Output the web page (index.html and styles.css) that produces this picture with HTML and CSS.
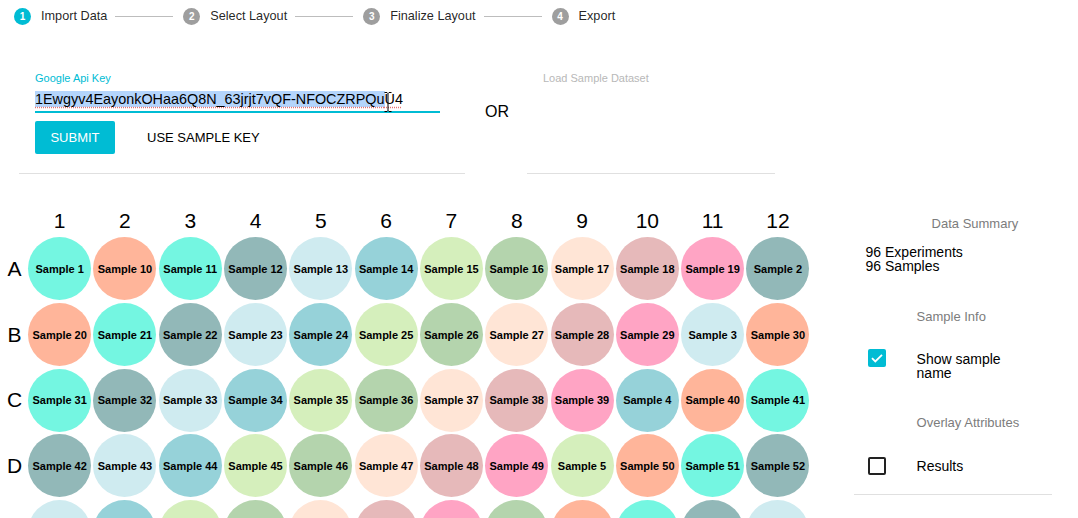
FILE: index.html
```html
<!DOCTYPE html>
<html>
<head>
<meta charset="utf-8">
<title>Plate Layout</title>
<link rel="stylesheet" href="styles.css">
</head>
<body>
<div class="stepper">
  <div class="step"><span class="step-icon active">1</span><span class="step-label">Import Data</span></div>
  <span class="step-line"></span>
  <div class="step"><span class="step-icon">2</span><span class="step-label">Select Layout</span></div>
  <span class="step-line"></span>
  <div class="step"><span class="step-icon">3</span><span class="step-label">Finalize Layout</span></div>
  <span class="step-line"></span>
  <div class="step"><span class="step-icon">4</span><span class="step-label">Export</span></div>
</div>

<div class="import">
  <div class="key-panel">
    <div class="field-label">Google Api Key</div>
    <div class="key-field">
      <span class="key-text"><span class="sel">1Ewgyv4EayonkOHaa6Q8N_63jrjt7vQF-NFOCZRPQu</span>U4</span>
      <svg class="ibeam" width="8" height="20" viewBox="0 0 8 20"><path d="M0.5 0.5h2.5l1 1l1-1h2.5M4 1.5v17M0.5 19.5h2.5l1-1l1 1h2.5" fill="none" stroke="#000" stroke-width="1"/></svg>
    </div>
    <div class="key-actions">
      <button class="btn-submit">SUBMIT</button>
      <button class="btn-flat">USE SAMPLE KEY</button>
    </div>
  </div>
  <div class="or">OR</div>
  <div class="dataset-panel">
    <div class="field-label disabled">Load Sample Dataset</div>
  </div>
</div>

<div class="main">
  <div class="plate">
    <div class="corner"></div>
    <div class="col-head">1</div><div class="col-head">2</div><div class="col-head">3</div><div class="col-head">4</div><div class="col-head">5</div><div class="col-head">6</div><div class="col-head">7</div><div class="col-head">8</div><div class="col-head">9</div><div class="col-head">10</div><div class="col-head">11</div><div class="col-head">12</div>

    <div class="row-head">A</div>
    <div class="well c1">Sample 1</div><div class="well c0">Sample 10</div><div class="well c1">Sample 11</div><div class="well c2">Sample 12</div><div class="well c3">Sample 13</div><div class="well c4">Sample 14</div><div class="well c5">Sample 15</div><div class="well c6">Sample 16</div><div class="well c7">Sample 17</div><div class="well c8">Sample 18</div><div class="well c9">Sample 19</div><div class="well c2">Sample 2</div>

    <div class="row-head">B</div>
    <div class="well c0">Sample 20</div><div class="well c1">Sample 21</div><div class="well c2">Sample 22</div><div class="well c3">Sample 23</div><div class="well c4">Sample 24</div><div class="well c5">Sample 25</div><div class="well c6">Sample 26</div><div class="well c7">Sample 27</div><div class="well c8">Sample 28</div><div class="well c9">Sample 29</div><div class="well c3">Sample 3</div><div class="well c0">Sample 30</div>

    <div class="row-head">C</div>
    <div class="well c1">Sample 31</div><div class="well c2">Sample 32</div><div class="well c3">Sample 33</div><div class="well c4">Sample 34</div><div class="well c5">Sample 35</div><div class="well c6">Sample 36</div><div class="well c7">Sample 37</div><div class="well c8">Sample 38</div><div class="well c9">Sample 39</div><div class="well c4">Sample 4</div><div class="well c0">Sample 40</div><div class="well c1">Sample 41</div>

    <div class="row-head">D</div>
    <div class="well c2">Sample 42</div><div class="well c3">Sample 43</div><div class="well c4">Sample 44</div><div class="well c5">Sample 45</div><div class="well c6">Sample 46</div><div class="well c7">Sample 47</div><div class="well c8">Sample 48</div><div class="well c9">Sample 49</div><div class="well c5">Sample 5</div><div class="well c0">Sample 50</div><div class="well c1">Sample 51</div><div class="well c2">Sample 52</div>

    <div class="row-head">E</div>
    <div class="well c3">Sample 53</div><div class="well c4">Sample 54</div><div class="well c5">Sample 55</div><div class="well c6">Sample 56</div><div class="well c7">Sample 57</div><div class="well c8">Sample 58</div><div class="well c9">Sample 59</div><div class="well c6">Sample 6</div><div class="well c0">Sample 60</div><div class="well c1">Sample 61</div><div class="well c2">Sample 62</div><div class="well c3">Sample 63</div>

    <div class="row-head">F</div>
    <div class="well c4">Sample 64</div><div class="well c5">Sample 65</div><div class="well c6">Sample 66</div><div class="well c7">Sample 67</div><div class="well c8">Sample 68</div><div class="well c9">Sample 69</div><div class="well c7">Sample 7</div><div class="well c0">Sample 70</div><div class="well c1">Sample 71</div><div class="well c2">Sample 72</div><div class="well c3">Sample 73</div><div class="well c4">Sample 74</div>

    <div class="row-head">G</div>
    <div class="well c5">Sample 75</div><div class="well c6">Sample 76</div><div class="well c7">Sample 77</div><div class="well c8">Sample 78</div><div class="well c9">Sample 79</div><div class="well c8">Sample 8</div><div class="well c0">Sample 80</div><div class="well c1">Sample 81</div><div class="well c2">Sample 82</div><div class="well c3">Sample 83</div><div class="well c4">Sample 84</div><div class="well c5">Sample 85</div>

    <div class="row-head">H</div>
    <div class="well c6">Sample 86</div><div class="well c7">Sample 87</div><div class="well c8">Sample 88</div><div class="well c9">Sample 89</div><div class="well c9">Sample 9</div><div class="well c0">Sample 90</div><div class="well c1">Sample 91</div><div class="well c2">Sample 92</div><div class="well c3">Sample 93</div><div class="well c4">Sample 94</div><div class="well c5">Sample 95</div><div class="well c6">Sample 96</div>
  </div>

  <div class="side">
    <div class="side-title t-summary">Data Summary</div>
    <div class="summary">96 Experiments<br>96 Samples</div>
    <div class="side-title t-info">Sample Info</div>
    <div class="check-row row-show">
      <span class="box checked"><svg width="18" height="18" viewBox="0 0 18 18"><path d="M4 9.2l3.3 3.3L14 5.8" fill="none" stroke="#fff" stroke-width="1.8"/></svg></span>
      <span class="check-label">Show sample name</span>
    </div>
    <div class="side-title t-overlay">Overlay Attributes</div>
    <div class="check-row row-results">
      <span class="box unchecked"></span>
      <span class="check-label single">Results</span>
    </div>
  </div>
</div>
</body>
</html>
```
FILE: styles.css
```css
* { box-sizing: border-box; }
html, body { overflow: hidden; }
body {
  margin: 0;
  font-family: "Liberation Sans", Arial, Helvetica, sans-serif;
  color: #000;
  background: #fff;
}

/* Stepper */
.stepper {
  display: flex;
  align-items: center;
  height: 32px;
  padding-left: 14px;
  font-size: 12.7px;
  color: rgba(0, 0, 0, 0.87);
}
.step { display: flex; align-items: center; }
.step-icon {
  width: 17px;
  height: 17px;
  border-radius: 50%;
  background: #9e9e9e;
  color: #fff;
  font-size: 10px;
  font-weight: bold;
  display: flex;
  align-items: center;
  justify-content: center;
  margin-right: 10px;
}
.step-icon.active { background: #00bcd4; }
.step-line {
  width: 58px;
  height: 1px;
  background: #bdbdbd;
  margin: 0 10px 0 8px;
}

/* Import section */
.import {
  display: flex;
  align-items: flex-start;
  padding-top: 40px;
}
.key-panel {
  margin-left: 19px;
  width: 446px;
  padding: 0 16px 19px;
  border-bottom: 1px solid #e0e0e0;
}
.field-label {
  font-size: 11px;
  line-height: 12px;
  height: 12px;
  color: #00bcd4;
}
.field-label.disabled { color: #b8b8b8; }
.key-field {
  position: relative;
  width: 405px;
  height: 29px;
  padding-top: 6px;
  border-bottom: 2px solid #00bcd4;
  font-size: 14.4px;
  line-height: 18px;
  white-space: nowrap;
}
.key-text {
  text-decoration: underline dotted #e57373;
  text-underline-offset: 3px;
}
.sel { background: #b4d5fc; }
.ibeam { position: absolute; left: 349px; top: 8px; }
.key-actions {
  display: flex;
  align-items: center;
  margin-top: 8px;
}
.btn-submit {
  width: 80px;
  height: 33px;
  border: none;
  border-radius: 2px;
  background: #00bcd4;
  color: #fff;
  font-family: inherit;
  font-size: 13px;
  padding: 0;
}
.btn-flat {
  margin-left: 16px;
  height: 33px;
  padding: 0 16px;
  border: none;
  background: transparent;
  color: #000;
  font-family: inherit;
  font-size: 13px;
}
.or {
  width: 62px;
  padding-left: 20px;
  margin-top: 31px;
  font-size: 16px;
  line-height: 18px;
}
.dataset-panel {
  width: 248px;
  height: 102px;
  padding-left: 16px;
  border-bottom: 1px solid #e0e0e0;
}

/* Main plate area */
.main {
  display: flex;
  align-items: flex-start;
  padding-top: 32px;
}
.plate {
  display: grid;
  grid-template-columns: 27px repeat(12, 65.3px);
  grid-template-rows: 30px;
  grid-auto-rows: 65.7px;
}
.col-head {
  font-size: 21px;
  line-height: 30px;
  text-align: center;
}
.row-head {
  font-size: 21px;
  display: flex;
  align-items: center;
  justify-content: center;
  padding-left: 2px;
}
.well {
  width: 63px;
  height: 63px;
  border-radius: 50%;
  justify-self: center;
  align-self: center;
  display: flex;
  align-items: center;
  justify-content: center;
  font-size: 11px;
  font-weight: bold;
  white-space: nowrap;
}
.c0 { background: #ffb59a; }
.c1 { background: #74f6e1; }
.c2 { background: #92b8b8; }
.c3 { background: #cfebf0; }
.c4 { background: #96d2d9; }
.c5 { background: #d5efbc; }
.c6 { background: #b4d4ad; }
.c7 { background: #ffe5d6; }
.c8 { background: #e6b9ba; }
.c9 { background: #ffa4c4; }

/* Side panel */
.side {
  margin-left: 43px;
  width: 198px;
  padding-bottom: 19px;
  border-bottom: 1px solid #e0e0e0;
}
.side-title {
  font-size: 13px;
  line-height: 16px;
  color: #7c7c7c;
}
.t-summary { margin-top: 10px; padding-left: 78px; }
.summary {
  margin-top: 13px;
  padding-left: 12px;
  font-size: 14px;
  line-height: 14px;
}
.t-info { margin-top: 36px; padding-left: 63px; }
.t-overlay { margin-top: 35px; padding-left: 63px; }
.check-row {
  display: flex;
  align-items: flex-start;
  padding-left: 14px;
}
.row-show { margin-top: 24px; }
.row-results { margin-top: 26px; align-items: center; }
.box {
  flex: none;
  width: 18px;
  height: 18px;
  border-radius: 2px;
  display: block;
}
.box svg { display: block; }
.box.checked { background: #00bcd4; }
.box.unchecked { border: 2px solid #222; }
.check-label {
  margin-left: 31px;
  margin-top: 3px;
  width: 100px;
  font-size: 14px;
  line-height: 14px;
}
.check-label.single { margin-top: 0; }
```
